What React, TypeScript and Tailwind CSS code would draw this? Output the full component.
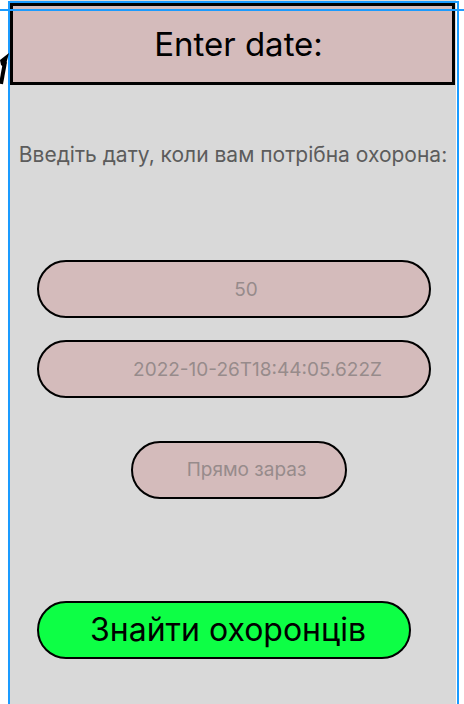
export default function App() {
  return (
    <main className="relative h-[704px] w-[464px] overflow-hidden bg-white font-['Inter','Noto_Sans',sans-serif]">
      <section className="ml-[10px] flex h-full w-[446px] flex-col bg-[#d9d9d9] pt-[3px]">
        <header className="flex h-[82px] w-[445px] items-center justify-center border-[3px] border-black bg-[#d4bbbb] pl-[12px]">
          <h1 className="text-[33px] leading-none text-black">Enter date:</h1>
        </header>

        <p className="mt-[57px] whitespace-nowrap text-center text-[21px] leading-[26px] text-[#5c5c5c]">
          Введіть дату, коли вам потрібна охорона:
        </p>

        <div className="ml-[27px] mt-[92px] flex flex-col">
          <input
            placeholder="50"
            className="h-[58px] w-[394px] rounded-full border-2 border-black bg-[#d4bbbb] pl-[24px] text-center text-[19px] outline-none placeholder:text-[#978b8b]"
          />
          <input
            placeholder="2022-10-26T18:44:05.622Z"
            className="mt-[22px] h-[58px] w-[394px] rounded-full border-2 border-black bg-[#d4bbbb] pl-[47px] text-center text-[19px] outline-none placeholder:text-[#978b8b]"
          />
          <button className="ml-[94px] mt-[43px] h-[58px] w-[216px] rounded-full border-2 border-black bg-[#d4bbbb] pl-[15px] text-[19px] text-[#978b8b]">
            Прямо зараз
          </button>
          <button className="mt-[102px] h-[58px] w-[374px] rounded-full border-2 border-black bg-[#0dff45] pl-[8px] text-[32px] text-black">
            Знайти охоронців
          </button>
        </div>
      </section>

      {/* selection outlines from the design tool */}
      <div className="absolute left-[8px] top-[1px] h-[2px] w-[451px] bg-[#1a9bff]" />
      <div className="absolute left-0 top-[9px] h-[2px] w-[464px] bg-[#1a9bff]" />
      <div className="absolute left-[8px] top-[1px] h-[703px] w-[2px] bg-[#1a9bff]" />
      <div className="absolute left-[457px] top-[1px] h-[703px] w-[2px] bg-[#1a9bff]" />
      <svg className="absolute left-0 top-[52px]" width="10" height="36" viewBox="0 0 10 36">
        <path d="M9 1 L0 8 L1 13 L5 16 Z" fill="black" />
        <path d="M5 10 L1 32" stroke="black" strokeWidth="4" />
      </svg>
    </main>
  );
}
